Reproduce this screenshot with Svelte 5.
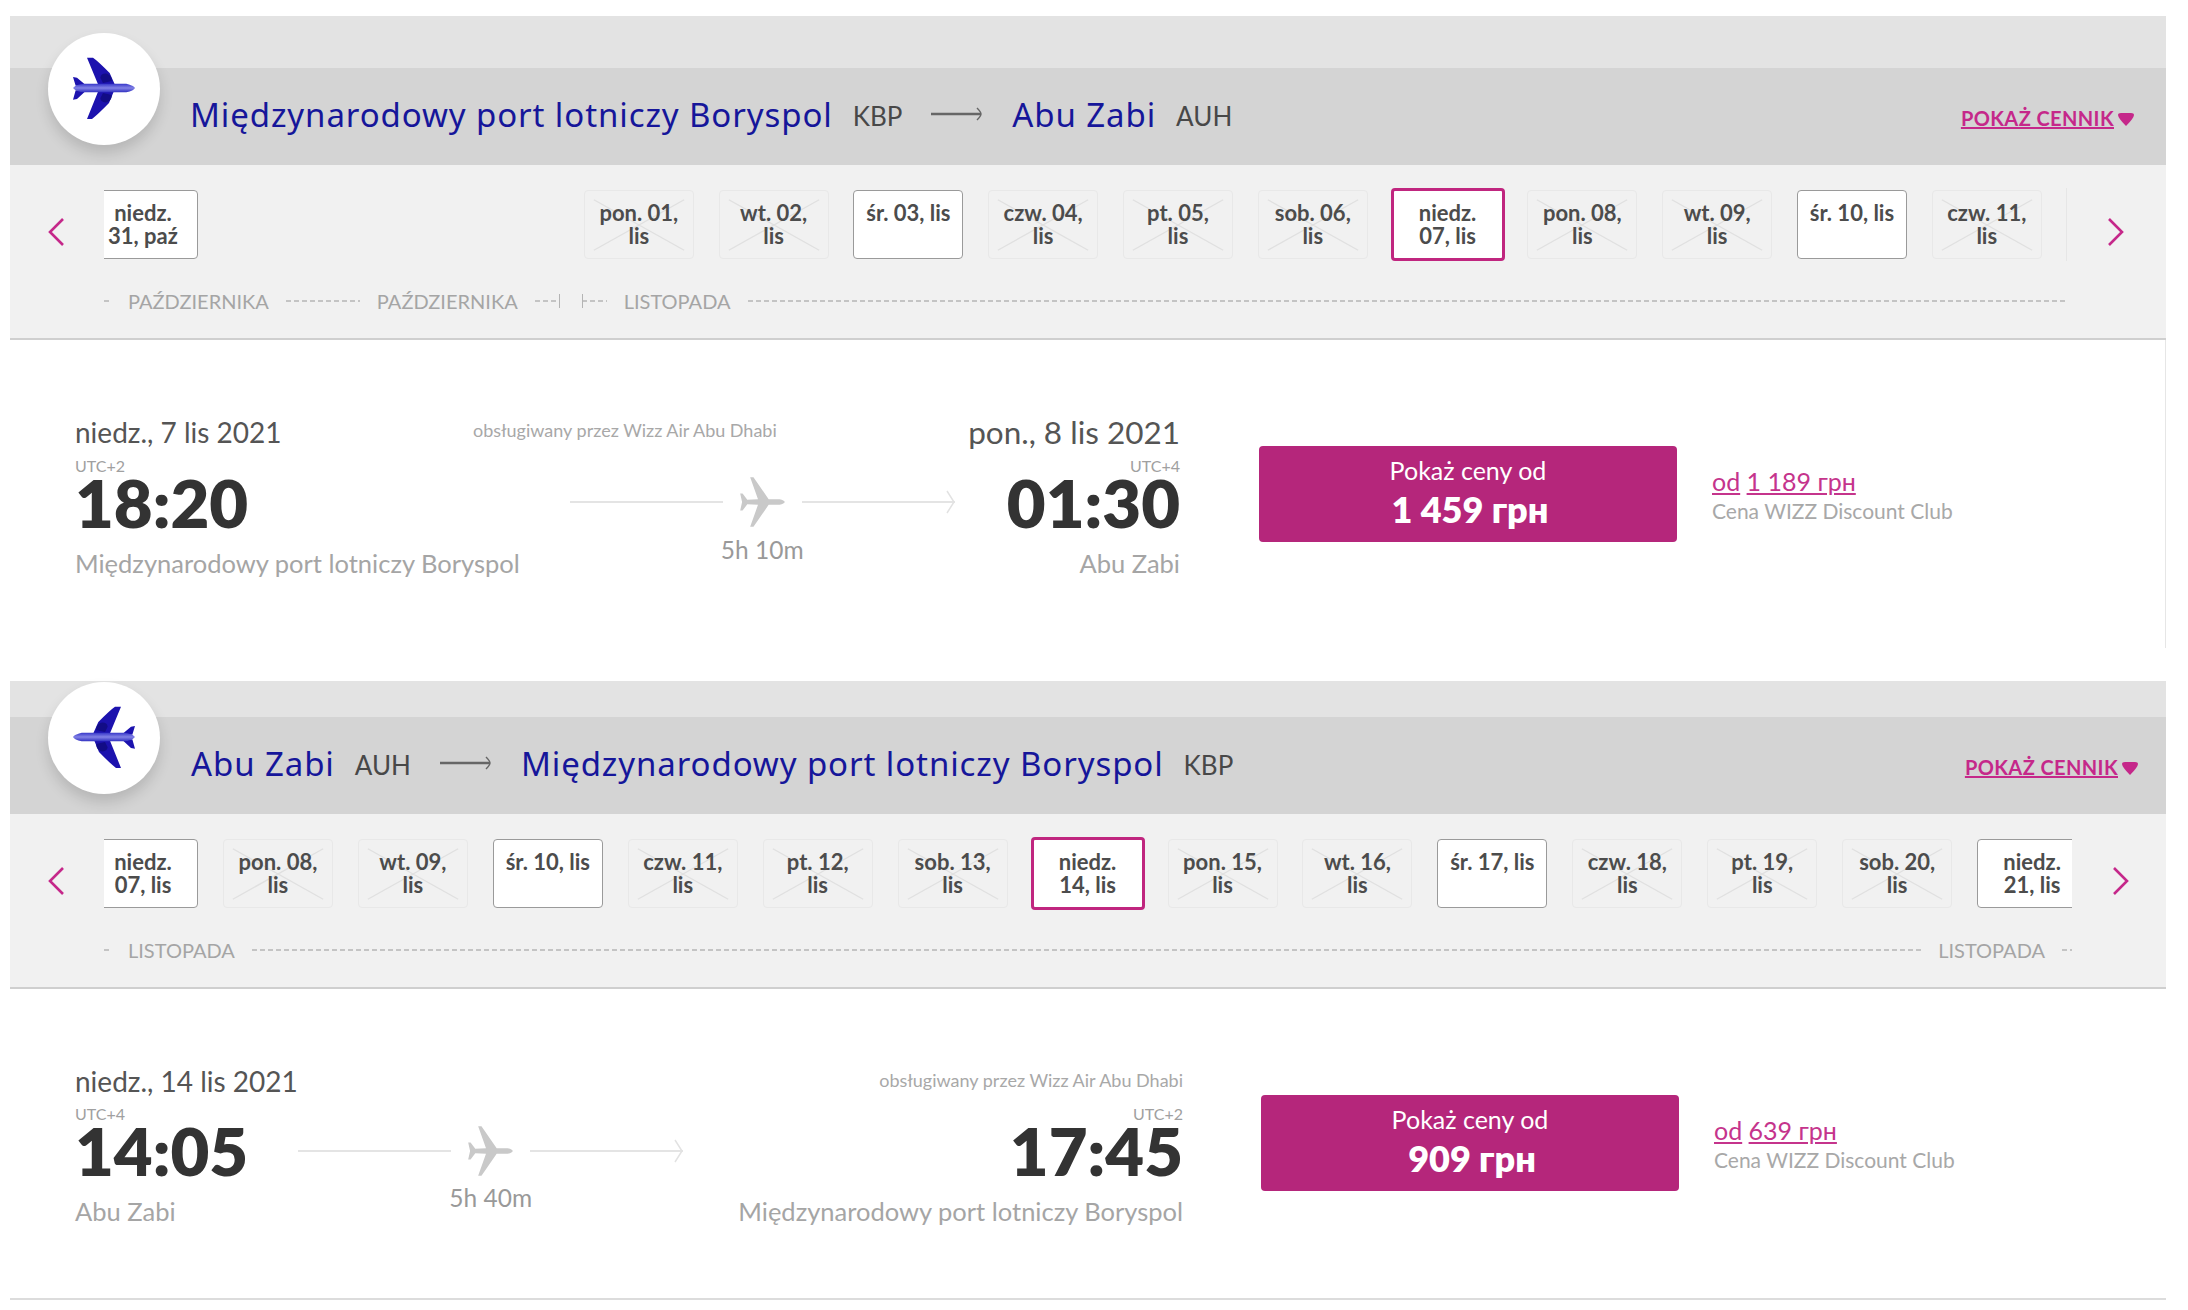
<script>
  const wings = 'M172 112 L190 112 Q205 122 240 158 L255 192 L205 192 Z M172 296 L187 296 Q205 282 238 248 L252 214 L205 214 Z M130 170 L142 172 L168 194 L138 196 Z M130 238 L142 236 L168 212 L138 210 Z';
  const engines = 'M212 172 Q214 158 232 160 Q248 166 246 182 L220 188 Z M212 234 Q214 248 232 246 Q248 240 246 224 L220 218 Z';
  const body = 'M130 203 Q140 191 165 190 L290 190 Q312 195 316 203 Q312 211 290 216 L165 216 Q140 215 130 203 Z';
  const slim = 'M172 100 L186 100 L250 192 L296 192 Q316 197 318 204 Q316 211 296 216 L250 216 L186 308 L172 308 L205 216 L160 214 L140 240 L130 240 L138 204 L130 168 L140 168 L160 194 L205 192 Z';

  const legs = [
    {
      id: 'out',
      from: 'Międzynarodowy port lotniczy Boryspol',
      fromCode: 'KBP',
      to: 'Abu Zabi',
      toCode: 'AUH',
      tiles: [
        { lines: ['niedz.', '31, paź'], kind: 'open' },
        { lines: ['pon. 01,', 'lis'], kind: 'off', jump: true },
        { lines: ['wt. 02,', 'lis'], kind: 'off' },
        { lines: ['śr. 03, lis'], kind: 'open' },
        { lines: ['czw. 04,', 'lis'], kind: 'off' },
        { lines: ['pt. 05,', 'lis'], kind: 'off' },
        { lines: ['sob. 06,', 'lis'], kind: 'off' },
        { lines: ['niedz.', '07, lis'], kind: 'sel' },
        { lines: ['pon. 08,', 'lis'], kind: 'off' },
        { lines: ['wt. 09,', 'lis'], kind: 'off' },
        { lines: ['śr. 10, lis'], kind: 'open' },
        { lines: ['czw. 11,', 'lis'], kind: 'off' }
      ],
      months: [
        { w: 7 },
        { label: 'PAŹDZIERNIKA' },
        { w: 74 },
        { label: 'PAŹDZIERNIKA' },
        { w: 25, tick: 'end' },
        { w: 25, tick: 'start' },
        { label: 'LISTOPADA' },
        { grow: true }
      ],
      date: 'niedz., 7 lis 2021',
      arrivalDate: 'pon., 8 lis 2021',
      depUtc: 'UTC+2',
      arrUtc: 'UTC+4',
      dep: '18:20',
      arr: '01:30',
      depName: 'Międzynarodowy port lotniczy Boryspol',
      arrName: 'Abu Zabi',
      duration: '5h 10m',
      price: '1 459 грн',
      club: '1 189 грн'
    },
    {
      id: 'back',
      from: 'Abu Zabi',
      fromCode: 'AUH',
      to: 'Międzynarodowy port lotniczy Boryspol',
      toCode: 'KBP',
      tiles: [
        { lines: ['niedz.', '07, lis'], kind: 'open' },
        { lines: ['pon. 08,', 'lis'], kind: 'off' },
        { lines: ['wt. 09,', 'lis'], kind: 'off' },
        { lines: ['śr. 10, lis'], kind: 'open' },
        { lines: ['czw. 11,', 'lis'], kind: 'off' },
        { lines: ['pt. 12,', 'lis'], kind: 'off' },
        { lines: ['sob. 13,', 'lis'], kind: 'off' },
        { lines: ['niedz.', '14, lis'], kind: 'sel' },
        { lines: ['pon. 15,', 'lis'], kind: 'off' },
        { lines: ['wt. 16,', 'lis'], kind: 'off' },
        { lines: ['śr. 17, lis'], kind: 'open' },
        { lines: ['czw. 18,', 'lis'], kind: 'off' },
        { lines: ['pt. 19,', 'lis'], kind: 'off' },
        { lines: ['sob. 20,', 'lis'], kind: 'off' },
        { lines: ['niedz.', '21, lis'], kind: 'open' }
      ],
      months: [
        { w: 7 },
        { label: 'LISTOPADA' },
        { grow: true },
        { label: 'LISTOPADA' },
        { w: 10 }
      ],
      date: 'niedz., 14 lis 2021',
      arrivalDate: '',
      depUtc: 'UTC+4',
      arrUtc: 'UTC+2',
      dep: '14:05',
      arr: '17:45',
      depName: 'Abu Zabi',
      arrName: 'Międzynarodowy port lotniczy Boryspol',
      duration: '5h 40m',
      price: '909 грн',
      club: '639 грн'
    }
  ];
</script>

<div class="page">
  {#each legs as leg}
    <section class="leg {leg.id}">
      <header class="head">
        <div class="top-band"></div>
        <div class="route-bar">
          <span class="place">{leg.from}</span>
          <span class="code">{leg.fromCode}</span>
          <svg class="long-arrow" viewBox="0 0 52 16" width="52" height="16">
            <path d="M0 8 H50" stroke="#666" stroke-width="2.4" fill="none" />
            <path d="M46 2 Q50 6 50 8 Q50 10 46 14" stroke="#666" stroke-width="1.4" fill="none" />
          </svg>
          <span class="place">{leg.to}</span>
          <span class="code">{leg.toCode}</span>
          <a class="fares" href="#fares">POKAŻ CENNIK</a>
          <svg class="heart" viewBox="0 0 16 14" width="16" height="14">
            <path d="M0 2 Q0 0 3 0 H13 Q16 0 16 2 Q16 5 8 13 Q0 5 0 2 Z" fill="#c5288a" />
          </svg>
        </div>
        <div class="badge">
          <svg viewBox="55 38 336 336" width="112" height="112">
            <defs>
              <linearGradient id="hull-{leg.id}" x1="0" y1="0" x2="0" y2="1">
                <stop offset="0" stop-color="#3535c8" />
                <stop offset="0.5" stop-color="#8282e6" />
                <stop offset="1" stop-color="#2f2fc0" />
              </linearGradient>
            </defs>
            <g class="jet">
              <path d={wings} fill="#1c12ae" />
              <path d={engines} fill="#120c86" />
              <path d={body} fill="url(#hull-{leg.id})" />
            </g>
          </svg>
        </div>
      </header>

      <div class="dates">
        <div class="picker">
          <svg class="chev" viewBox="0 0 17 28" width="17" height="28">
            <path d="M15 1 L2 14 L15 27" stroke="#c5288a" stroke-width="2.6" fill="none" />
          </svg>
          <div class="strip">
            {#each leg.tiles as tile}
              <div class="tile {tile.kind}" class:jump={tile.jump}>
                {#if tile.kind === 'off'}
                  <svg class="cross" viewBox="0 0 110 69" preserveAspectRatio="none">
                    <path d="M9 9 L101 61 M101 9 L9 61" stroke="#e0e0e0" stroke-width="1.4" fill="none" />
                  </svg>
                {/if}
                {#each tile.lines as line}
                  <span class="tile-line">{line}</span>
                {/each}
              </div>
            {/each}
          </div>
          <svg class="chev next" viewBox="0 0 17 28" width="17" height="28">
            <path d="M2 1 L15 14 L2 27" stroke="#c5288a" stroke-width="2.6" fill="none" />
          </svg>
        </div>
        <div class="months">
          {#each leg.months as m}
            {#if m.label}
              <span class="month">{m.label}</span>
            {:else}
              <span
                class="dashes"
                class:grow={m.grow}
                class:tick-end={m.tick === 'end'}
                class:tick-start={m.tick === 'start'}
                style:width={m.w ? m.w + 'px' : null}
              ></span>
            {/if}
          {/each}
        </div>
      </div>

      <div class="flight">
        <div class="details">
          <div class="day-row">
            <span class="day">{leg.date}</span>
            <span class="operated">obsługiwany przez Wizz Air Abu Dhabi</span>
            {#if leg.arrivalDate}
              <span class="day arrival">{leg.arrivalDate}</span>
            {/if}
          </div>
          <div class="times">
            <div class="stop">
              <div class="utc">{leg.depUtc}</div>
              <div class="clock">{leg.dep}</div>
              <div class="airport">{leg.depName}</div>
            </div>
            <div class="path">
              <div class="path-line">
                <span class="rule"></span>
                <svg class="small-jet" viewBox="125 95 198 218" width="47" height="52">
                  <path d={slim} fill="#c9c9c9" />
                </svg>
                <span class="rule"></span>
                <svg class="tip" viewBox="0 0 9 24" width="9" height="24">
                  <path d="M1 1 L8 12 L1 23" stroke="#e2e2e2" stroke-width="1.5" fill="none" />
                </svg>
              </div>
              <div class="duration">{leg.duration}</div>
            </div>
            <div class="stop end">
              <div class="utc">{leg.arrUtc}</div>
              <div class="clock">{leg.arr}</div>
              <div class="airport">{leg.arrName}</div>
            </div>
          </div>
        </div>
        <button class="price">
          <span class="price-label">Pokaż ceny od</span>
          <span class="price-value">{leg.price}</span>
        </button>
        <div class="club">
          <div class="club-price"><a href="#club">od</a> <a href="#club">{leg.club}</a></div>
          <div class="club-name">Cena WIZZ Discount Club</div>
        </div>
      </div>
    </section>
  {/each}
</div>

<style>
  :global(body) {
    margin: 0;
    background: #fff;
  }

  .page {
    width: 2188px;
    height: 1310px;
    padding: 16px 22px 0 10px;
    box-sizing: border-box;
    font-family: Lato, "Noto Sans", sans-serif;
    overflow: hidden;
  }

  .head {
    position: relative;
  }

  .top-band {
    height: 52px;
    background: #e3e3e3;
  }

  .back .top-band {
    height: 36px;
  }

  .route-bar {
    height: 97px;
    box-sizing: border-box;
    padding: 0 32px 6px 180px;
    background: #d4d4d4;
    display: flex;
    align-items: center;
  }

  .back .route-bar {
    padding-right: 28px;
    padding-left: 181px;
  }

  .place {
    margin-top: 2px;
    font-family: "Noto Sans", sans-serif;
    font-size: 33px;
    letter-spacing: 0.9px;
    color: #16169a;
  }

  .code {
    margin: 4px 0 0 20px;
    font-size: 26px;
    color: #484848;
  }

  .long-arrow {
    margin: 0 29px;
  }

  .fares {
    margin: 8px 0 0 auto;
    font-size: 20px;
    font-weight: 700;
    letter-spacing: 0.4px;
    color: #c5288a;
    text-decoration-thickness: 2px;
  }

  .heart {
    margin-left: 4px;
    margin-top: 12px;
  }

  .badge {
    position: absolute;
    left: 38px;
    bottom: 20px;
    width: 112px;
    height: 112px;
    border-radius: 50%;
    background: #fff;
    box-shadow: 0 8px 14px rgba(0, 0, 0, 0.14);
  }

  .back .jet {
    transform: scaleX(-1);
    transform-origin: 223px 203px;
  }

  .dates {
    height: 175px;
    box-sizing: border-box;
    padding: 25px 0 0 38px;
    background: #f1f1f1;
    border-bottom: 2px solid #cfcfcf;
  }

  .picker {
    display: flex;
    align-items: center;
  }

  .chev {
    flex: none;
    margin-top: 13px;
  }

  .next {
    margin-left: 40px;
  }

  .strip {
    flex: none;
    width: 1963px;
    height: 73px;
    margin: -2px 0 0 39px;
    padding-top: 2px;
    display: flex;
    gap: 24.8px;
    overflow: hidden;
    box-sizing: border-box;
    border-right: 1px solid #e6e6e6;
  }

  .back .strip {
    width: 1968px;
    gap: 24.95px;
    border-right: 0;
  }

  .strip .tile:first-child {
    margin-left: -16px;
  }

  .tile {
    position: relative;
    flex: none;
    width: 110px;
    height: 69px;
    box-sizing: border-box;
    padding-top: 10px;
    border-radius: 4px;
    display: flex;
    flex-direction: column;
    align-items: center;
    font-size: 22px;
    line-height: 23px;
    font-weight: 700;
    color: #4c4c4c;
  }

  .jump {
    margin-left: 361px;
  }

  .open {
    background: #fff;
    border: 1.5px solid #9a9a9a;
  }

  .off {
    border: 1.5px solid #e8e8e8;
  }

  .sel {
    background: #fff;
    border: 3px solid #c0267f;
    width: 114px;
    height: 73px;
    margin: -2px -2px;
  }

  .tile-line {
    position: relative;
    white-space: nowrap;
  }

  .cross {
    position: absolute;
    inset: 0;
    width: 100%;
    height: 100%;
  }

  .months {
    display: flex;
    align-items: center;
    gap: 17px;
    margin: 28px 0 0 56px;
    height: 24px;
    padding-right: 94px;
    color: #a5a5a5;
    font-size: 20px;
  }

  .out .months {
    padding-right: 101px;
  }

  .month {
    white-space: nowrap;
  }

  .dashes {
    flex: none;
    height: 2px;
    background: repeating-linear-gradient(90deg, #c4c4c4 0 5px, transparent 5px 8px);
    position: relative;
  }

  .grow {
    flex: 1;
  }

  .tick-end::after,
  .tick-start::after {
    content: '';
    position: absolute;
    top: -6px;
    height: 14px;
    border-left: 1px solid #b4b4b4;
  }

  .tick-end::after {
    right: 0;
  }

  .tick-start {
    margin-left: 5px;
  }

  .tick-start::after {
    left: 0;
  }

  .flight {
    height: 308px;
    margin-bottom: 33px;
    box-sizing: border-box;
    padding: 74px 0 0 65px;
    display: flex;
    align-items: flex-start;
    border-right: 1px solid #e6e6e6;
  }

  .back .flight {
    height: 311px;
    margin-bottom: 0;
    border-right: 0;
    border-bottom: 2px solid #dcdcdc;
    padding-top: 74px;
  }

  .details {
    flex: none;
    width: 1105px;
  }

  .back .details {
    width: 1108px;
  }

  .day-row {
    display: flex;
    justify-content: space-between;
    align-items: center;
    height: 36px;
  }

  .day {
    font-size: 28px;
    color: #555;
  }

  .arrival {
    font-size: 31.5px;
  }

  .operated {
    margin-top: -4px;
    font-size: 18px;
    color: #a8a8a8;
  }

  .back .operated {
    margin-top: -2px;
  }

  .times {
    display: flex;
    margin-top: 6px;
  }

  .back .times {
    margin-top: 5px;
  }

  .end {
    margin-left: auto;
    text-align: right;
  }

  .utc {
    font-size: 16px;
    line-height: 20px;
    color: #a0a0a0;
  }

  .clock {
    font-size: 67px;
    line-height: 52px;
    font-weight: 800;
    color: #333;
  }

  .airport {
    margin-top: 18px;
    font-size: 25.5px;
    line-height: 34px;
    color: #a5a5a5;
    white-space: nowrap;
  }

  .path {
    margin: 20px 0 0 50px;
    display: flex;
    flex-direction: column;
    align-items: center;
  }

  .back .path {
    margin-top: 21px;
  }

  .path-line {
    display: flex;
    align-items: center;
  }

  .rule {
    width: 153px;
    height: 2px;
    background: #e4e4e4;
  }

  .small-jet {
    margin: 0 16px;
  }

  .tip {
    margin-left: -9px;
  }

  .duration {
    margin-top: 8px;
    font-size: 24.5px;
    line-height: 28px;
    color: #999;
  }

  .back .duration {
    margin-top: 7px;
  }

  .price {
    flex: none;
    margin: 32px 0 0 79px;
    width: 418px;
    height: 96px;
    padding: 0 0 5px;
    border: 0;
    border-radius: 4px;
    background: #b5267b;
    color: #fff;
    font-family: inherit;
    display: flex;
    flex-direction: column;
    align-items: center;
    justify-content: center;
  }

  .back .price {
    margin-left: 78px;
  }

  .price-label {
    font-size: 25px;
    line-height: 34px;
  }

  .price-value {
    padding-left: 4px;
    font-size: 36px;
    line-height: 44px;
    font-weight: 800;
  }

  .club {
    margin: 51px 0 0 35px;
  }

  .club-price {
    font-size: 25px;
    line-height: 32px;
    color: #c5348c;
  }

  .club-price a {
    color: inherit;
  }

  .club-name {
    font-size: 21px;
    line-height: 28px;
    color: #a8a8a8;
  }
</style>
